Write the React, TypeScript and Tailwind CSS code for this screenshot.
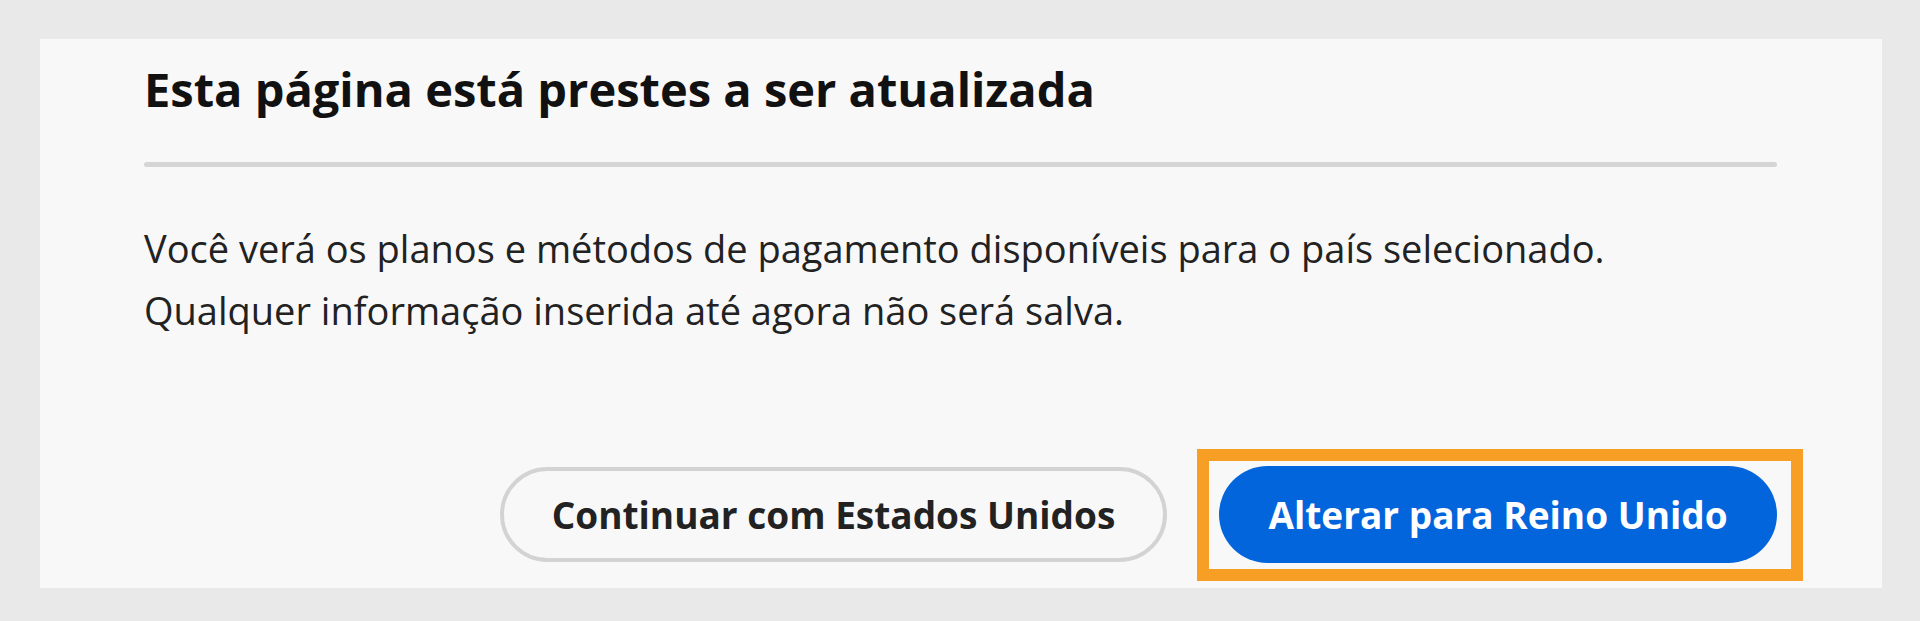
export default function App() {
  return (
    <div className="h-[621px] w-full bg-[#e9e9e9] pl-[40px] pr-[38px] pt-[39px] font-['Open_Sans',sans-serif]">
      <div className="flex h-[549px] flex-col bg-[#f8f8f8] pb-[25px] pl-[104px] pr-[105px] pt-[20px]">
        <h1 className="text-[47px] font-bold leading-[60px] text-[#111]">
          Esta página está prestes a ser atualizada
        </h1>
        <div className="mt-[43px] h-[5px] w-full rounded-full bg-[#d5d5d5]" />
        <div className="mt-[50px] text-[38px] leading-[62px] text-[#222]">
          <p>Você verá os planos e métodos de pagamento disponíveis para o país selecionado.</p>
          <p>Qualquer informação inserida até agora não será salva.</p>
        </div>

        <div className="mt-auto flex items-center justify-end gap-[52px]">
          <button className="flex h-[95px] w-[667px] items-center justify-center rounded-full border-[4px] border-[#d3d3d3] bg-[#f8f8f8] text-[37px] font-bold text-[#222]">
            Continuar com Estados Unidos
          </button>
          <span className="relative">
            <button className="flex h-[97px] w-[558px] items-center justify-center rounded-full bg-[#0265dc] text-[37px] font-bold text-white">
              Alterar para Reino Unido
            </button>
            {/* highlight annotation */}
            <span className="pointer-events-none absolute -bottom-[18px] -left-[22px] -right-[26px] -top-[17px] border-[12px] border-[#f79f25]" />
          </span>
        </div>
      </div>
    </div>
  );
}
